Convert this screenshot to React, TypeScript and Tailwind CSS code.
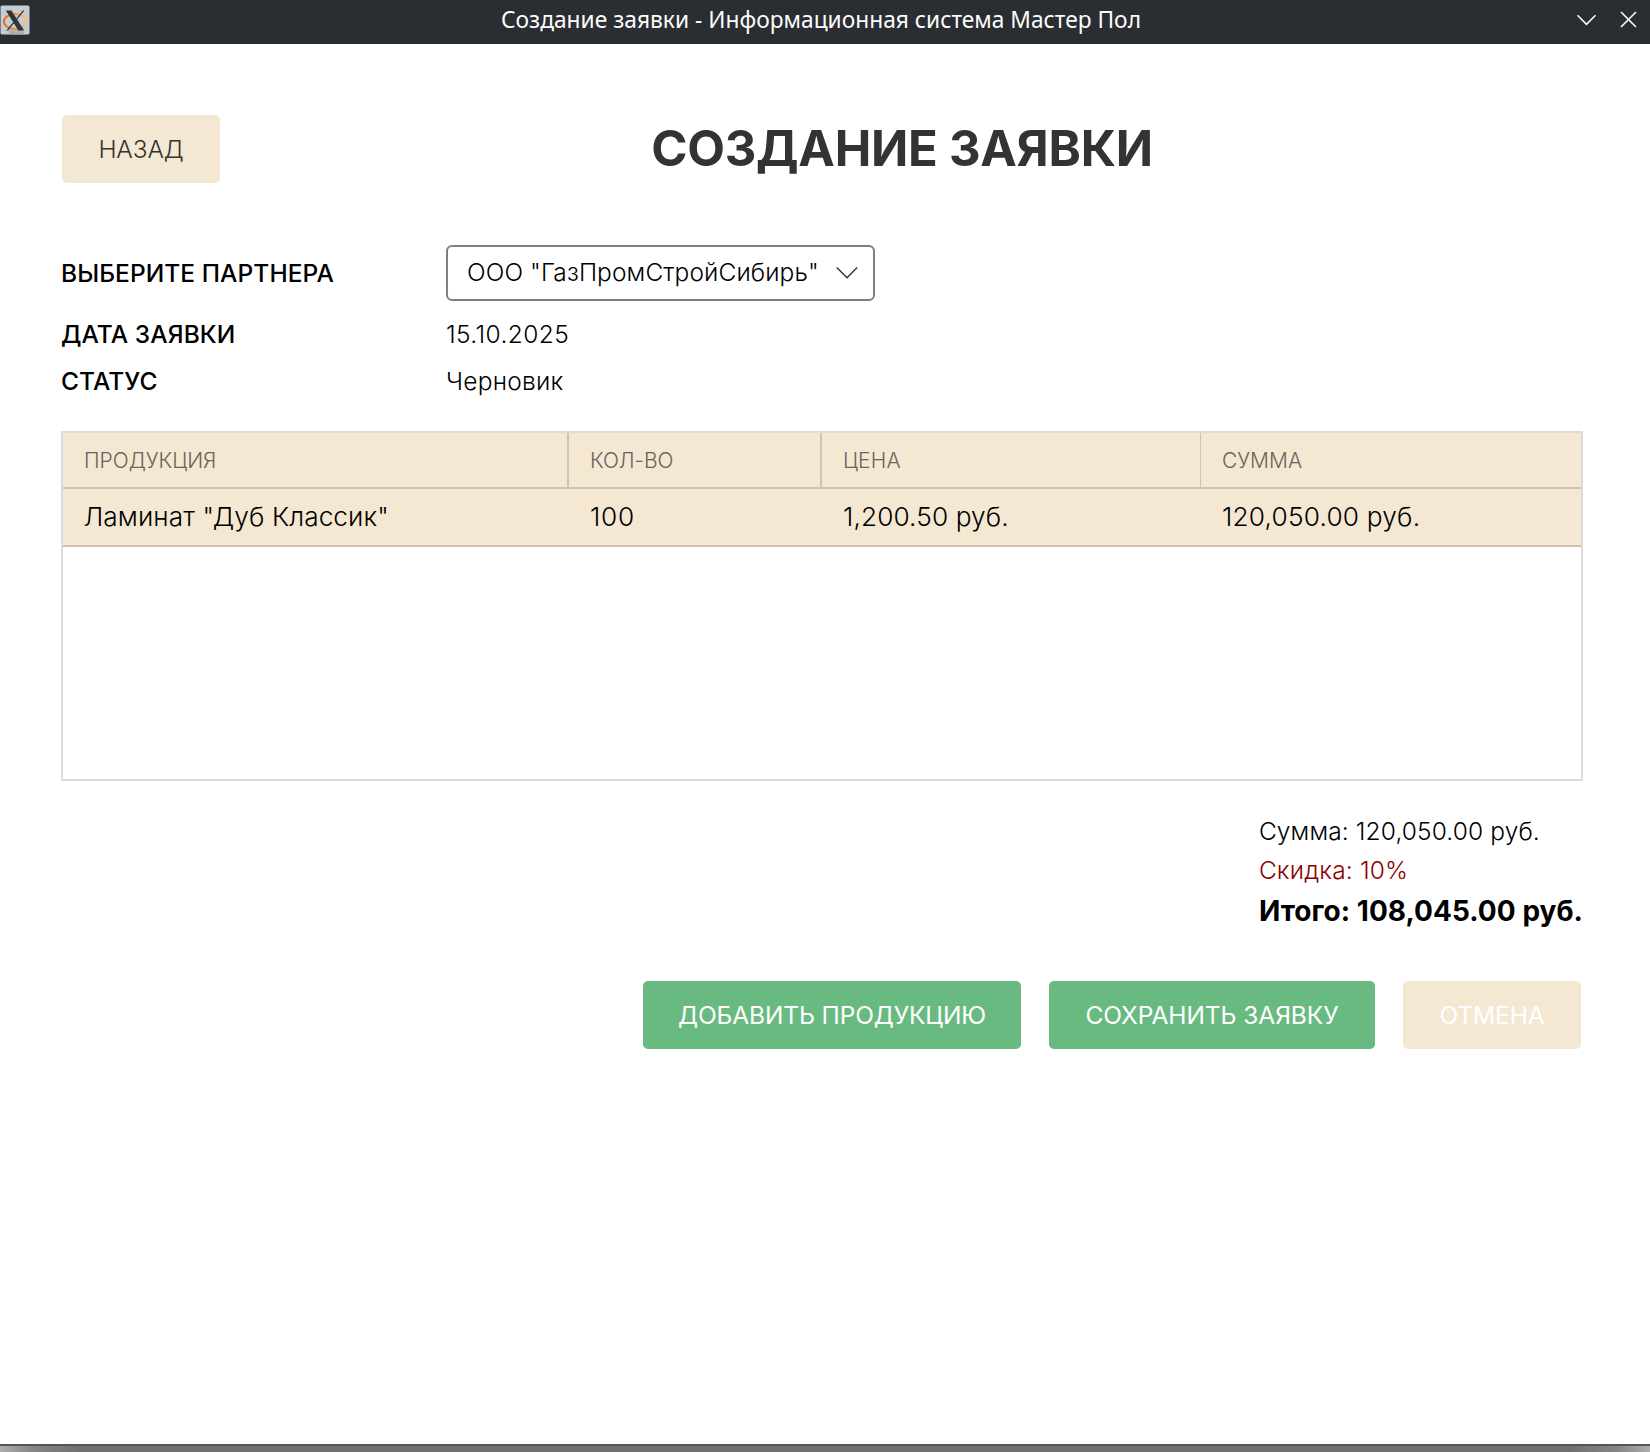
import React from "react";

const rows = [
  { name: 'Ламинат "Дуб Классик"', qty: "100", price: "1,200.50 руб.", sum: "120,050.00 руб." },
];

function AppIcon() {
  return (
    <svg width="30" height="30" viewBox="0 0 30 30" fill="none">
      <defs>
        <linearGradient id="ring" x1="3" y1="0" x2="28" y2="0" gradientUnits="userSpaceOnUse">
          <stop offset="0" stopColor="#f4511e" />
          <stop offset="0.5" stopColor="#fb8c2c" />
          <stop offset="1" stopColor="#ffc777" />
        </linearGradient>
      </defs>
      <rect x="0.5" y="0.5" width="29" height="29" rx="1.5" fill="#c5cdd0" />
      <path d="M7 25.5 L15 24 L22 25 L25 29.5 H11 Z" fill="#aab1b4" />
      <ellipse cx="15.2" cy="16.5" rx="11.3" ry="7.3" stroke="url(#ring)" strokeWidth="1.7" />
      <path d="M22.8 5.5 H24.5 L8 25.5 H6.3 Z" fill="#30363a" />
      <path d="M5.8 5.5 H11.4 L24.2 25.5 H18.4 Z" fill="#30363a" />
    </svg>
  );
}

function TitleBar() {
  return (
    <div className="flex h-[44px] items-start bg-[#2a2d32] font-['Noto_Sans']">
      <div className="flex w-[100px] pt-[4.5px]">
        <AppIcon />
      </div>
      <div className="flex-1 pt-[4px] pl-px text-center text-[22.75px] leading-[32px] whitespace-nowrap text-[#fcfcfc]">
        <span>Создание заявки - Информационная система Мастер Пол</span>
      </div>
      <div className="flex w-[109px] justify-end pt-[9px] pr-[9px]">
        <svg width="66" height="22" viewBox="0 0 66 22" fill="none" stroke="#fcfcfc" strokeWidth="1.6">
          <path d="M2.5 6.3 L11.5 15.3 L20.5 6.3" />
          <path d="M46 3 L61 18 M61 3 L46 18" />
        </svg>
      </div>
    </div>
  );
}

function Header() {
  return (
    <div className="flex h-[68px] items-center">
      <button className="h-[68px] w-[158px] rounded-[5px] bg-[#f4e8d3] text-[24.5px] font-light tracking-[-0.15px] text-[#333333]">НАЗАД</button>
      <h1 className="flex-1 pl-px text-center text-[49px] leading-[60px] font-bold tracking-[-0.27px] text-[#333333]">СОЗДАНИЕ ЗАЯВКИ</h1>
    </div>
  );
}

function Field({ label, children, className }: { label: string; children: React.ReactNode; className: string }) {
  return (
    <div className={"flex items-center " + className}>
      <div className="-ml-px w-[385px] font-medium tracking-[0.07px]">{label}</div>
      {children}
    </div>
  );
}

export default function App() {
  return (
    <div className="flex h-[1452px] w-[1650px] flex-col bg-white font-['Inter',sans-serif] text-[24.5px] leading-[30px] text-black">
      <TitleBar />
      <main className="flex flex-1 flex-col pt-[71px] pr-[67px] pl-[62px]">
        <Header />
        <section className="mt-[62px] flex flex-col">
          <Field label="ВЫБЕРИТЕ ПАРТНЕРА" className="h-[56px]">
            <div className="flex h-[56px] w-[429px] items-center justify-between rounded-[6px] border-2 border-[#808080] pr-[14px] pl-[19px] font-light">
              <span className="pb-[2px] tracking-[0.1px] whitespace-nowrap">ООО "ГазПромСтройСибирь"</span>
              <svg width="24" height="16" viewBox="0 0 24 16" fill="none" stroke="#333333" strokeWidth="1.4">
                <path d="M1.8 2.5 L12 12.8 L22.2 2.5" />
              </svg>
            </div>
          </Field>
          <Field label="ДАТА ЗАЯВКИ" className="mt-[18px] h-[30px]">
            <span className="font-light tracking-[0.4px]">15.10.2025</span>
          </Field>
          <Field label="СТАТУС" className="mt-[17px] h-[30px]">
            <span className="font-light tracking-[0.25px]">Черновик</span>
          </Field>
        </section>

        <section className="mt-[35px] -ml-px h-[350px] w-[1522px] border-2 border-[#dcdcdc]">
          <div className="grid h-[56px] grid-cols-[506px_253px_379px_1fr] border-b-2 border-[#cfc4b1] bg-[#f4e8d3] text-[21px] leading-[56px] font-light text-[#6a655c]">
            <div className="h-[54px] border-r-2 border-[#cfc4b1] pl-[21px]">ПРОДУКЦИЯ</div>
            <div className="h-[54px] border-r-2 border-[#cfc4b1] pl-[21px] tracking-[-0.1px]">КОЛ-ВО</div>
            <div className="h-[54px] border-r border-[#cfc4b1] pl-[21px] tracking-[0.2px]">ЦЕНА</div>
            <div className="h-[54px] pl-[21px]">СУММА</div>
          </div>
          {rows.map((r) => (
            <div key={r.name} className="grid h-[58px] grid-cols-[506px_253px_379px_1fr] border-b-2 border-[#cfc1ae] bg-[#f4e8d3] text-[26.25px] leading-[56px] font-light">
              <div className="pl-[20.5px] tracking-[0.07px]">{r.name}</div>
              <div className="pl-[21px] tracking-[0.7px]">{r.qty}</div>
              <div className="pl-[21px] tracking-[0.1px]">{r.price}</div>
              <div className="pl-[21px] tracking-[0.2px]">{r.sum}</div>
            </div>
          ))}
        </section>

        <section className="mt-[35px] flex flex-col self-end">
          <div className="h-[39px] font-light tracking-[0.12px]">Сумма: 120,050.00 руб.</div>
          <div className="h-[39px] font-light tracking-[0.15px] text-[#8b0000]">Скидка: 10%</div>
          <div className="h-[34px] text-[28px] leading-[34px] font-bold tracking-[0.04px]">Итого: 108,045.00 руб.</div>
        </section>

        <section className="mt-[53px] mr-[2px] flex gap-[28px] self-end text-white">
          <button className="h-[68px] w-[378px] rounded-[5px] bg-[#68ba80] tracking-[-0.12px]">ДОБАВИТЬ ПРОДУКЦИЮ</button>
          <button className="h-[68px] w-[326px] rounded-[5px] bg-[#68ba80] tracking-[-0.07px]">СОХРАНИТЬ ЗАЯВКУ</button>
          <button className="h-[68px] w-[178px] rounded-[5px] bg-[#f4e8d3] tracking-[-0.1px]">ОТМЕНА</button>
        </section>
      </main>
      <div className="h-[8px] border-t-2 border-[#50565a] bg-[linear-gradient(to_right,#adadad_0,#858585_33px,#707070_80px,#707070_1570px,#858585_1617px,#adadad_1650px)]" />
    </div>
  );
}
